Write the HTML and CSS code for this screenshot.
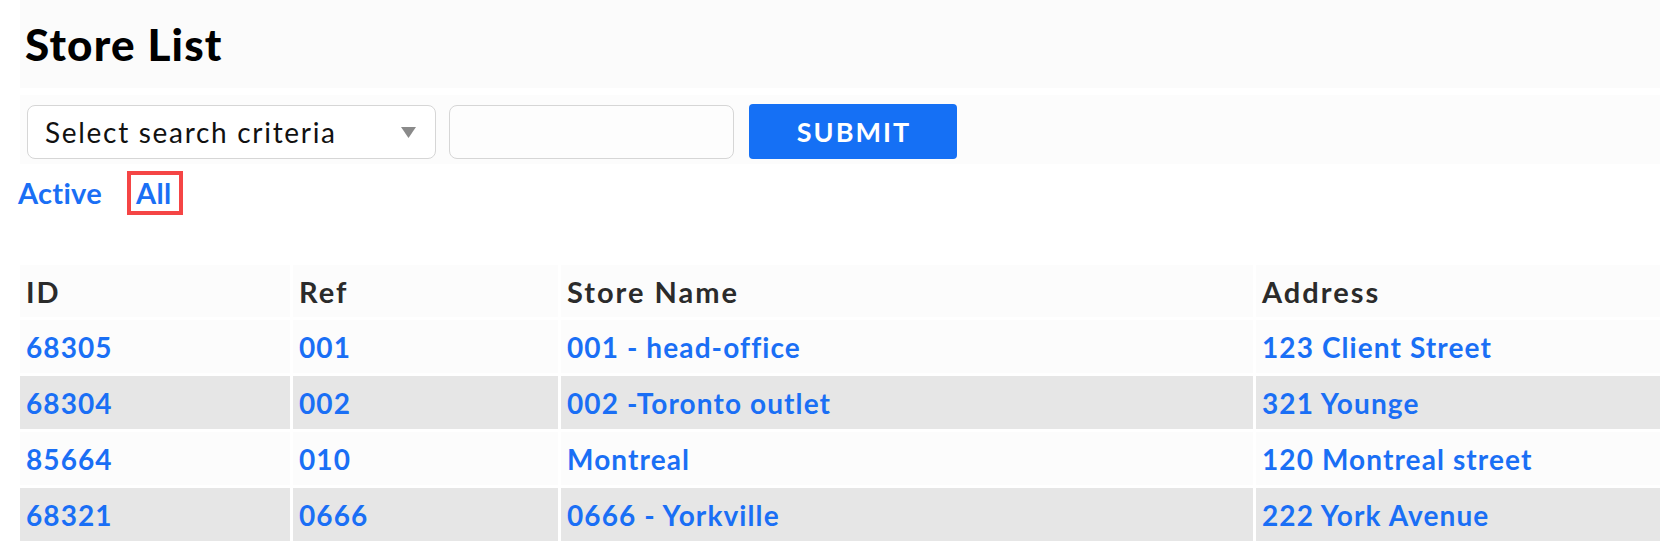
FILE: index.html
```html
<!DOCTYPE html>
<html lang="en">
<head>
<meta charset="utf-8">
<title>Store List</title>
<link rel="stylesheet" href="styles.css">
</head>
<body>
<div class="page">
  <div class="title-bar"><h1 class="title">Store List</h1></div>
  <form class="search">
    <div class="select">
      <span class="select-label">Select search criteria</span>
      <svg class="caret" width="15" height="11" viewBox="0 0 15 11"><path d="M0 0 H15 L7.5 11 Z" fill="#8a8a8a"/></svg>
    </div>
    <input class="query" type="text">
    <button class="submit" type="button">SUBMIT</button>
  </form>
  <div class="filters">
    <a class="filter">Active</a>
    <a class="filter current">All</a>
  </div>
  <table class="stores">
    <colgroup>
      <col class="c-id"><col class="c-ref"><col class="c-name"><col class="c-addr">
    </colgroup>
    <thead>
      <tr><th>ID</th><th>Ref</th><th>Store Name</th><th>Address</th></tr>
    </thead>
    <tbody>
      <tr><td>68305</td><td>001</td><td>001 - head-office</td><td>123 Client Street</td></tr>
      <tr><td>68304</td><td>002</td><td>002 -Toronto outlet</td><td>321 Younge</td></tr>
      <tr><td>85664</td><td>010</td><td>Montreal</td><td>120 Montreal street</td></tr>
      <tr><td>68321</td><td>0666</td><td>0666 - Yorkville</td><td>222 York Avenue</td></tr>
    </tbody>
  </table>
</div>
</body>
</html>
```
FILE: styles.css
```css
html, body {
  margin: 0;
  padding: 0;
  background: #ffffff;
  overflow: hidden;
}
body {
  font-family: "Lato", "Open Sans", sans-serif;
  color: #000;
}
.page {
  width: 1700px;
}
.title-bar {
  margin-left: 20px;
  height: 88px;
  background: #fbfbfb;
  display: flex;
  align-items: center;
}
.title {
  margin: 0;
  padding-left: 5px;
  font-size: 44px;
  line-height: 88px;
  font-weight: 900;
  letter-spacing: 1.2px;
}
.search {
  margin: 7px 0 0 20px;
  padding: 9px 0 5px 7px;
  background: #fcfcfc;
  display: flex;
  align-items: center;
}
.select {
  box-sizing: border-box;
  width: 409px;
  height: 54px;
  border: 1.5px solid #d6d6d6;
  border-radius: 8px;
  background: #fff;
  display: flex;
  align-items: center;
  justify-content: space-between;
  padding: 0 19px 0 17px;
}
.select-label {
  font-size: 28px;
  font-weight: 400;
  letter-spacing: 1.7px;
  color: #111;
}
.caret {
  display: block;
  margin-top: 2px;
}
.query {
  box-sizing: border-box;
  width: 285px;
  height: 54px;
  margin-left: 13px;
  border: 1.5px solid #d6d6d6;
  border-radius: 8px;
  background: #fdfdfd;
}
.submit {
  box-sizing: border-box;
  width: 208px;
  height: 55px;
  margin-left: 15px;
  border: none;
  border-radius: 4px;
  background: #1570f5;
  color: #fff;
  font-family: inherit;
  font-size: 27px;
  font-weight: 700;
  letter-spacing: 2px;
  text-indent: 2px;
}
.filters {
  margin: 7px 0 0 18px;
  display: flex;
  align-items: baseline;
  gap: 25px;
}
.filter {
  font-size: 29px;
  font-weight: 700;
  line-height: 36px;
  color: #1a6ff5;
  letter-spacing: 0.3px;
}
.filter.current {
  border: 4px solid #f54545;
  padding: 0 8px 0 5px;
}
.stores {
  margin: 47px 0 0 17px;
  border-spacing: 3.5px;
  table-layout: fixed;
  width: 1680px;
  font-size: 28px;
}
.c-id { width: 270px; }
.c-ref { width: 265px; }
.c-name { width: 692px; }
.stores th,
.stores td {
  text-align: left;
  padding: 0 5px 0 6px;
  height: 53px;
  box-sizing: border-box;
  white-space: nowrap;
}
.stores th {
  background: #fcfcfc;
  color: #2b2b2b;
  font-weight: 700;
  font-size: 29px;
  letter-spacing: 2px;
  height: 52px;
}
.stores td {
  color: #1a6ff5;
  font-weight: 700;
  letter-spacing: 1.1px;
}
.stores tbody tr:nth-child(odd) td {
  background: #fcfcfc;
}
.stores tbody tr:nth-child(even) td {
  background: #e6e6e6;
}
```
